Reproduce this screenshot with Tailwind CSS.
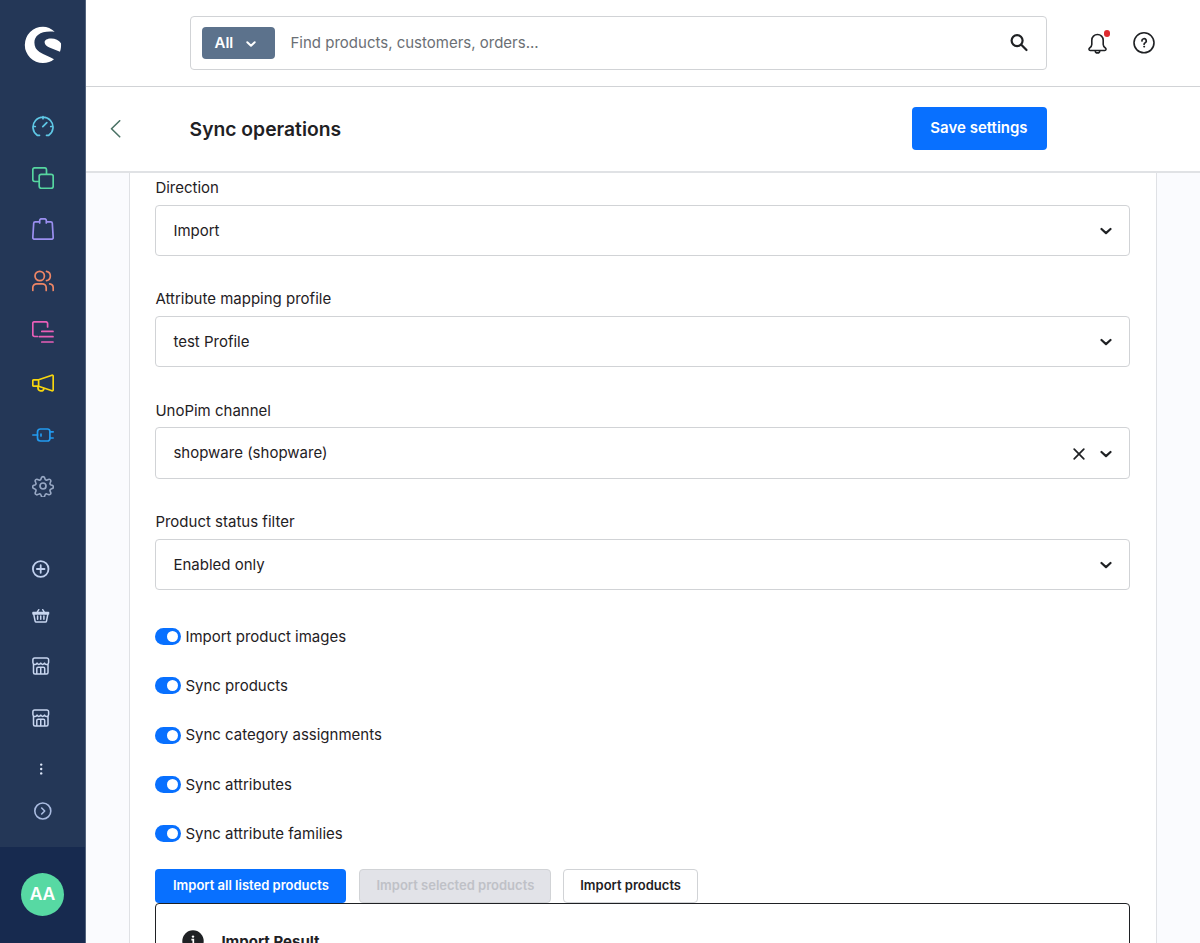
<!DOCTYPE html>
<html lang="en">
<head>
  <meta charset="UTF-8">
  <meta name="viewport" content="width=device-width, initial-scale=1.0">
  <title>Sync operations</title>
  <script src="https://cdn.jsdelivr.net/npm/@tailwindcss/browser@4"></script>
</head>
<body class="flex h-[943px] overflow-hidden bg-[#fafbfe] font-[Inter,sans-serif] text-[15px] text-[#1f2124]">

  <!-- Sidebar -->
  <aside class="flex w-[86px] shrink-0 flex-col border-r border-[#52637d] bg-[#243757]">
    <div class="flex h-[100.8px] pl-6 pt-[26px]">
      <svg class="size-[38px]" viewBox="24 26 38 38" fill="#fff">
        <path d="M54.700 31.800C51.500 28.500 47 26.700 43 26.700A18.200 18.200 0 0 0 43 63.100C47.500 63.100 51 61.800 54 59.300C50 56.500 44 55 39.500 52C36 49.700 34.400 46.500 34.400 42.500C34.400 35.500 41 30.300 54.700 31.800Z"/>
        <path d="M61 43.300C59 40 55 38.300 51 38.400C47 38.400 44.600 40 44.600 42.300C44.600 45 47 46.500 50 47.800L60 51.800C61 49 61.200 46 61 43.300Z"/>
      </svg>
    </div>

    <!-- Main navigation -->
    <nav class="flex flex-col pl-8">
      <a class="flex h-[51.4px] items-center">
        <svg class="size-[22px]" viewBox="0 0 22 22" fill="none" stroke="#5fc8e6" stroke-width="1.7" stroke-linecap="round" stroke-linejoin="round"><path d="M7.500 20.300H5.200A10 10 0 1 1 16.800 20.300H14.500M11 1.500v2.200M1 11.500h2.300M18.700 11.500H21M10.800 11.700L14.800 7.600"/></svg>
      </a>
      <a class="flex h-[51.4px] items-center">
        <svg class="size-[22px]" viewBox="0 0 22 22" fill="none" stroke="#56d6a0" stroke-width="1.7" stroke-linejoin="round"><path d="M7 14.500H2.800a2 2 0 0 1-2-2V2.800a2 2 0 0 1 2-2h9.700a2 2 0 0 1 2 2V7"/><rect x="7.200" y="7.300" width="14" height="14" rx="2"/></svg>
      </a>
      <a class="flex h-[51.4px] items-center">
        <svg class="size-[22px]" viewBox="0 0 22 22" fill="none" stroke="#9a8ff0" stroke-width="1.7" stroke-linecap="round" stroke-linejoin="round"><path d="M5 3.800H3.200A1.500 1.500 0 0 0 1.700 5.200L.8 19.500a1.600 1.600 0 0 0 1.600 1.700h17.200a1.600 1.600 0 0 0 1.600-1.700L20.300 5.200a1.500 1.500 0 0 0-1.500-1.400H17M7.700 5V2.500A1.700 1.700 0 0 1 9.400.8h3.200a1.700 1.700 0 0 1 1.700 1.700V5M7.700 3.800H5M17 3.800h-2.700"/></svg>
      </a>
      <a class="flex h-[51.4px] items-center">
        <svg class="size-[22px]" viewBox="0 0 22 22" fill="none" stroke="#ee8666" stroke-width="1.7" stroke-linecap="round"><circle cx="7.700" cy="6" r="4.700"/><path d="M.8 20.500v-2.700a4 4 0 0 1 4-4h5.400a4 4 0 0 1 4 4v2.700M14.500 1.300a4.800 4.800 0 0 1 0 9.400M17.700 13.900a4 4 0 0 1 3.500 4v2.600"/></svg>
      </a>
      <a class="flex h-[51.4px] items-center">
        <svg class="size-[22px]" viewBox="0 0 22 22" fill="none" stroke="#e85fb8" stroke-width="1.7" stroke-linecap="round"><path d="M5.500 15.500H2.600a1.800 1.800 0 0 1-1.800-1.800V2.400A1.600 1.600 0 0 1 2.600.8h11.200a1.800 1.800 0 0 1 1.800 1.800V6M9.800 10.400H21M7.500 15.700H21M9.800 21H21"/></svg>
      </a>
      <a class="flex h-[51.4px] items-center">
        <svg class="size-[22px]" viewBox="0 0 22 22" fill="none" stroke="#f8d60e" stroke-width="1.7" stroke-linejoin="round"><path d="M6.600 7.800L20 3.200a1 1 0 0 1 1.200 1v13.600a1 1 0 0 1-1.200 1L6.600 14.300zM6.600 7.800H1.800a1 1 0 0 0-1 1v4.400a1 1 0 0 0 1 1h4.800M6 14.500v1.500a3 3 0 0 0 5.900.7"/></svg>
      </a>
      <a class="flex h-[51.4px] items-center">
        <svg class="size-[22px]" viewBox="0 0 22 22" fill="none" stroke="#229aef" stroke-width="1.7" stroke-linecap="round" stroke-linejoin="round"><path d="M.8 11h4.700M9 10v2M18 7.900h3.200M18 14h3.200"/><path d="M8 5h7.500A2.300 2.300 0 0 1 17.900 7.300v7.400A2.300 2.300 0 0 1 15.500 17H8.500a3 3 0 0 1-3-3V7.900A3 3 0 0 1 8.500 5z"/></svg>
      </a>
      <a class="flex h-[51.4px] items-center">
        <svg class="size-[22px]" viewBox="0 0 22 22" fill="none" stroke="#98a8c4" stroke-width="1.7" stroke-linejoin="round"><circle cx="11" cy="11" r="3"/><path d="M9.300 2.400a1.800 1.800 0 0 1 3.400 0l.4 1.200a1.700 1.700 0 0 0 2.400 1l1.100-.5a1.800 1.800 0 0 1 2.400 2.400l-.5 1.100a1.700 1.700 0 0 0 1 2.400l1.100.3a1.800 1.800 0 0 1 0 3.400l-1.100.4a1.700 1.700 0 0 0-1 2.400l.5 1.100a1.800 1.800 0 0 1-2.400 2.400l-1.100-.5a1.700 1.700 0 0 0-2.400 1l-.4 1.100a1.800 1.800 0 0 1-3.400 0l-.4-1.100a1.700 1.700 0 0 0-2.400-1l-1.100.5a1.800 1.800 0 0 1-2.400-2.400l.5-1.100a1.700 1.700 0 0 0-1-2.400l-1.100-.4a1.800 1.800 0 0 1 0-3.400l1.100-.3a1.700 1.700 0 0 0 1-2.400l-.5-1.100a1.800 1.800 0 0 1 2.400-2.400l1.100.5a1.700 1.700 0 0 0 2.400-1z" transform="translate(.5 .5) scale(.955)"/></svg>
      </a>
    </nav>

    <!-- Extension navigation -->
    <nav class="mt-[34.700px] flex flex-col pl-8">
      <a class="flex h-[45px] items-center">
        <svg class="size-[18px]" viewBox="0 0 18 18" fill="none" stroke="#c0d0ee" stroke-width="1.800" stroke-linecap="round"><circle cx="8.700" cy="9" r="7.800"/><path d="M8.700 5.200v7.600M4.900 9h7.600"/></svg>
      </a>
      <a class="flex h-[48.500px] items-center">
        <svg class="size-[18px]" viewBox="0 0 18 18" fill="none" stroke="#c8d6f0" stroke-width="1.500" stroke-linecap="round" stroke-linejoin="round"><path d="M1 5.600h15.500v1.500H1zM1.800 7.400l1.300 6.700a1.200 1.200 0 0 0 1.200 1h9a1.200 1.200 0 0 0 1.200-1l1.300-6.700M5 5.400L6.800 2.700M12.500 5.400l-1.800-2.700M5.600 9v3.300M8.750 9v3.300M11.900 9v3.300"/></svg>
      </a>
      <a class="flex h-[52.100px] items-center">
        <svg class="size-[18px]" viewBox="0 0 18 18" fill="none" stroke="#c8d6f0" stroke-width="1.500" stroke-linecap="round" stroke-linejoin="round"><path d="M2.700.9h12.100a1.800 1.800 0 0 1 1.800 1.800v2.800a2.100 2.100 0 0 1-4.100.6 2 2 0 0 1-3.750 0 2 2 0 0 1-3.750 0A2.100 2.100 0 0 1 .9 5.500V2.700A1.800 1.800 0 0 1 2.700.9zM1.500 7.500v8.100a1.500 1.500 0 0 0 1.500 1.500h11.500a1.500 1.500 0 0 0 1.500-1.500V7.500M4.800 17v-5.500a1.300 1.300 0 0 1 1.300-1.300h5.300a1.300 1.300 0 0 1 1.300 1.300V17M8.750 10.200V17"/></svg>
      </a>
      <a class="flex h-[51.4px] items-center">
        <svg class="size-[18px]" viewBox="0 0 18 18" fill="none" stroke="#c8d6f0" stroke-width="1.500" stroke-linecap="round" stroke-linejoin="round"><path d="M2.700.9h12.100a1.800 1.800 0 0 1 1.800 1.800v2.800a2.100 2.100 0 0 1-4.100.6 2 2 0 0 1-3.750 0 2 2 0 0 1-3.750 0A2.100 2.100 0 0 1 .9 5.500V2.700A1.800 1.800 0 0 1 2.700.9zM1.500 7.500v8.100a1.500 1.500 0 0 0 1.500 1.500h11.500a1.500 1.500 0 0 0 1.500-1.500V7.500M4.800 17v-5.500a1.300 1.300 0 0 1 1.300-1.300h5.300a1.300 1.300 0 0 1 1.300 1.300V17M8.750 10.200V17"/></svg>
      </a>
      <a class="flex h-[51.4px] items-center">
        <svg class="size-[18px]" viewBox="0 0 18 18" fill="#dce6f8"><circle cx="9.200" cy="4.600" r="1.200"/><circle cx="9.200" cy="9" r="1.200"/><circle cx="9.200" cy="13.400" r="1.200"/></svg>
      </a>
      <a class="flex h-8 items-center pl-[2px]">
        <svg class="size-[18px]" viewBox="0 0 18 18" fill="none" stroke="#a9bbe0" stroke-width="1.600" stroke-linecap="round" stroke-linejoin="round"><circle cx="8.800" cy="9" r="8"/><path d="M7.700 6l3 3-3 3"/></svg>
      </a>
    </nav>

    <div class="mt-auto flex h-[96px] justify-center bg-[#172a4f] pt-[26px]">
      <div class="flex size-[43px] items-center justify-center rounded-full bg-[#57d9a3] text-[17.500px] font-semibold text-white">AA</div>
    </div>
  </aside>

  <div class="flex min-w-0 flex-1 flex-col">
    <!-- Search bar -->
    <header class="flex h-[87px] shrink-0 items-start border-b border-[#d1d3d6] bg-white pl-[104px] pt-4">
      <div class="flex h-[54px] w-[857px] items-center rounded border border-[#d1d3d6] pl-[10.500px] pr-[17px]">
        <button class="flex h-8 w-[73px] items-center rounded-[4px] bg-[#5c728c] pl-[13px] pt-px font-semibold text-white">
          All
          <svg class="ml-[13px] size-[10px]" viewBox="0 0 10 10" fill="none" stroke="currentColor" stroke-width="2" stroke-linecap="round" stroke-linejoin="round"><path d="M1.300 3.300L5 6.800 8.700 3.300"/></svg>
        </button>
        <span class="ml-[16px] text-[#6b6f75]">Find products, customers, orders...</span>
        <svg class="ml-auto size-[20px]" viewBox="0 0 20 20" fill="none" stroke="#1f2124" stroke-width="2.200" stroke-linecap="round"><circle cx="8.100" cy="7.600" r="5.500"/><path d="M12.300 11.700L17.500 17"/></svg>
      </div>
      <div class="relative ml-[39.500px] mt-4 size-[22px]">
        <svg class="size-[22px]" viewBox="0 0 22 22" fill="none" stroke="#1f2124" stroke-width="1.600" stroke-linecap="round" stroke-linejoin="round"><path d="M10.500 2.500a5.700 5.700 0 0 1 5.700 5.700v4.200c0 1.700.9 2.600 2.300 3.800.9.800.6 2.300-.7 2.300H3.200c-1.300 0-1.600-1.500-.7-2.300 1.400-1.200 2.300-2.100 2.300-3.800V8.200a5.700 5.700 0 0 1 5.700-5.700z"/><path d="M8.300 18.900a2.200 2 0 0 0 4.400 0"/></svg>
        <span class="absolute -top-[2px] left-[17px] size-[6.500px] rounded-full bg-[#de2b30]"></span>
      </div>
      <svg class="ml-[24.700px] mt-4 size-[22px]" viewBox="0 0 22 22" fill="none" stroke="#1f2124" stroke-width="1.600" stroke-linecap="round" stroke-linejoin="round"><circle cx="11" cy="10.800" r="10"/><path stroke-width="1.700" d="M8.900 9a2.200 2.200 0 1 1 3.300 1.800c-.8.400-1.100.7-1.100 1.500"/><circle cx="11.100" cy="14.700" r=".5" fill="#1f2124" stroke-width="1"/></svg>
    </header>

    <!-- Page head -->
    <div class="flex h-[86px] shrink-0 items-center border-b-2 border-[#e0e2e5] bg-white pl-6">
      <svg class="h-[18px] w-[11px]" viewBox="0 0 11 18" fill="none" stroke="#4a7265" stroke-width="1.600" stroke-linecap="round" stroke-linejoin="round"><path d="M9.700 .8L1.500 8.800l8.200 8"/></svg>
      <h1 class="ml-[68.600px] text-[19.300px] font-semibold">Sync operations</h1>
      <button class="mb-px ml-auto mr-[153px] h-[43px] w-[135px] rounded bg-[#0870ff] pr-px font-semibold text-white">Save settings</button>
    </div>

    <!-- Settings card -->
    <main class="ml-[43px] w-[1028px] flex-1 overflow-hidden border-x border-[#dfe1e5] bg-white pl-[25.400px] pr-[25.600px] pt-[6px]">
      <div class="flex flex-col gap-[34.300px]">
        <div>
          <div class="mb-[8.600px] leading-[17.100px]">Direction</div>
          <div class="flex h-[51.400px] items-center justify-between rounded border border-[#d1d3d6] px-[17px] pt-px">
            Import
            <svg class="size-3" viewBox="0 0 12 12" fill="none" stroke="currentColor" stroke-width="2.200" stroke-linecap="round" stroke-linejoin="round"><path d="M1.500 4L6 8.100 10.500 4"/></svg>
          </div>
        </div>
        <div>
          <div class="mb-[8.600px] leading-[17.100px]">Attribute mapping profile</div>
          <div class="flex h-[51.400px] items-center justify-between rounded border border-[#d1d3d6] px-[17px]">
            test Profile
            <svg class="size-3" viewBox="0 0 12 12" fill="none" stroke="currentColor" stroke-width="2.200" stroke-linecap="round" stroke-linejoin="round"><path d="M1.500 4L6 8.100 10.500 4"/></svg>
          </div>
        </div>
        <div>
          <div class="mb-[8.600px] leading-[17.100px]">UnoPim channel</div>
          <div class="flex h-[51.400px] items-center rounded border border-[#d1d3d6] px-[17px] pt-px">
            shopware (shopware)
            <svg class="ml-auto mr-[15px] size-3" viewBox="0 0 12 12" fill="none" stroke="currentColor" stroke-width="1.700" stroke-linecap="round"><path d="M1.200 1.200l9.600 9.600M10.800 1.200l-9.600 9.600"/></svg>
            <svg class="size-3" viewBox="0 0 12 12" fill="none" stroke="currentColor" stroke-width="2.200" stroke-linecap="round" stroke-linejoin="round"><path d="M1.500 4L6 8.100 10.500 4"/></svg>
          </div>
        </div>
        <div>
          <div class="mb-[8.600px] leading-[17.100px]">Product status filter</div>
          <div class="flex h-[51.400px] items-center justify-between rounded border border-[#d1d3d6] px-[17px] pt-px">
            Enabled only
            <svg class="size-3" viewBox="0 0 12 12" fill="none" stroke="currentColor" stroke-width="2.200" stroke-linecap="round" stroke-linejoin="round"><path d="M1.500 4L6 8.100 10.500 4"/></svg>
          </div>
        </div>
      </div>

      <!-- Switches -->
      <div class="mt-[21.700px] flex flex-col">
        <label class="flex h-[49.300px] items-center gap-1"><span class="flex h-[17px] w-[26px] items-center justify-end rounded-full bg-[#0870ff] pr-[3px]"><span class="size-[11px] rounded-full bg-white"></span></span><span class="pt-px">Import product images</span></label>
        <label class="flex h-[49.300px] items-center gap-1"><span class="flex h-[17px] w-[26px] items-center justify-end rounded-full bg-[#0870ff] pr-[3px]"><span class="size-[11px] rounded-full bg-white"></span></span><span class="pt-px">Sync products</span></label>
        <label class="flex h-[49.300px] items-center gap-1"><span class="flex h-[17px] w-[26px] items-center justify-end rounded-full bg-[#0870ff] pr-[3px]"><span class="size-[11px] rounded-full bg-white"></span></span><span class="pt-px">Sync category assignments</span></label>
        <label class="flex h-[49.300px] items-center gap-1"><span class="flex h-[17px] w-[26px] items-center justify-end rounded-full bg-[#0870ff] pr-[3px]"><span class="size-[11px] rounded-full bg-white"></span></span><span class="pt-px">Sync attributes</span></label>
        <label class="flex h-[49.300px] items-center gap-1"><span class="flex h-[17px] w-[26px] items-center justify-end rounded-full bg-[#0870ff] pr-[3px]"><span class="size-[11px] rounded-full bg-white"></span></span><span class="pt-px">Sync attribute families</span></label>
      </div>

      <!-- Import actions -->
      <div class="mt-[10.300px] flex h-[34.500px] text-[13px] font-semibold">
        <button class="w-[191px] rounded bg-[#0870ff] text-white">Import all listed products</button>
        <button class="ml-[13px] w-[192px] rounded border border-[#d1d3d6] bg-[#e2e3e8] text-[#bfc1c7]">Import selected products</button>
        <button class="ml-[12px] w-[134.500px] rounded border border-[#d1d3d6] bg-white">Import products</button>
      </div>

      <!-- Result banner -->
      <div class="flex h-20 items-start rounded border border-[#1f2124] pl-[26px] pt-[26px]">
        <svg class="size-[22px]" viewBox="0 0 22 22"><circle cx="11" cy="11" r="10.700" fill="#1f2124"/><path d="M9.400 9.600h1.900v6M9.200 15.800h4" fill="none" stroke="#fff" stroke-width="1.700"/><circle cx="11" cy="6.600" r="1.200" fill="#fff"/></svg>
        <div class="ml-[17px] pt-[1px] font-bold leading-[21px]">Import Result</div>
      </div>
    </main>
  </div>
</body>
</html>
